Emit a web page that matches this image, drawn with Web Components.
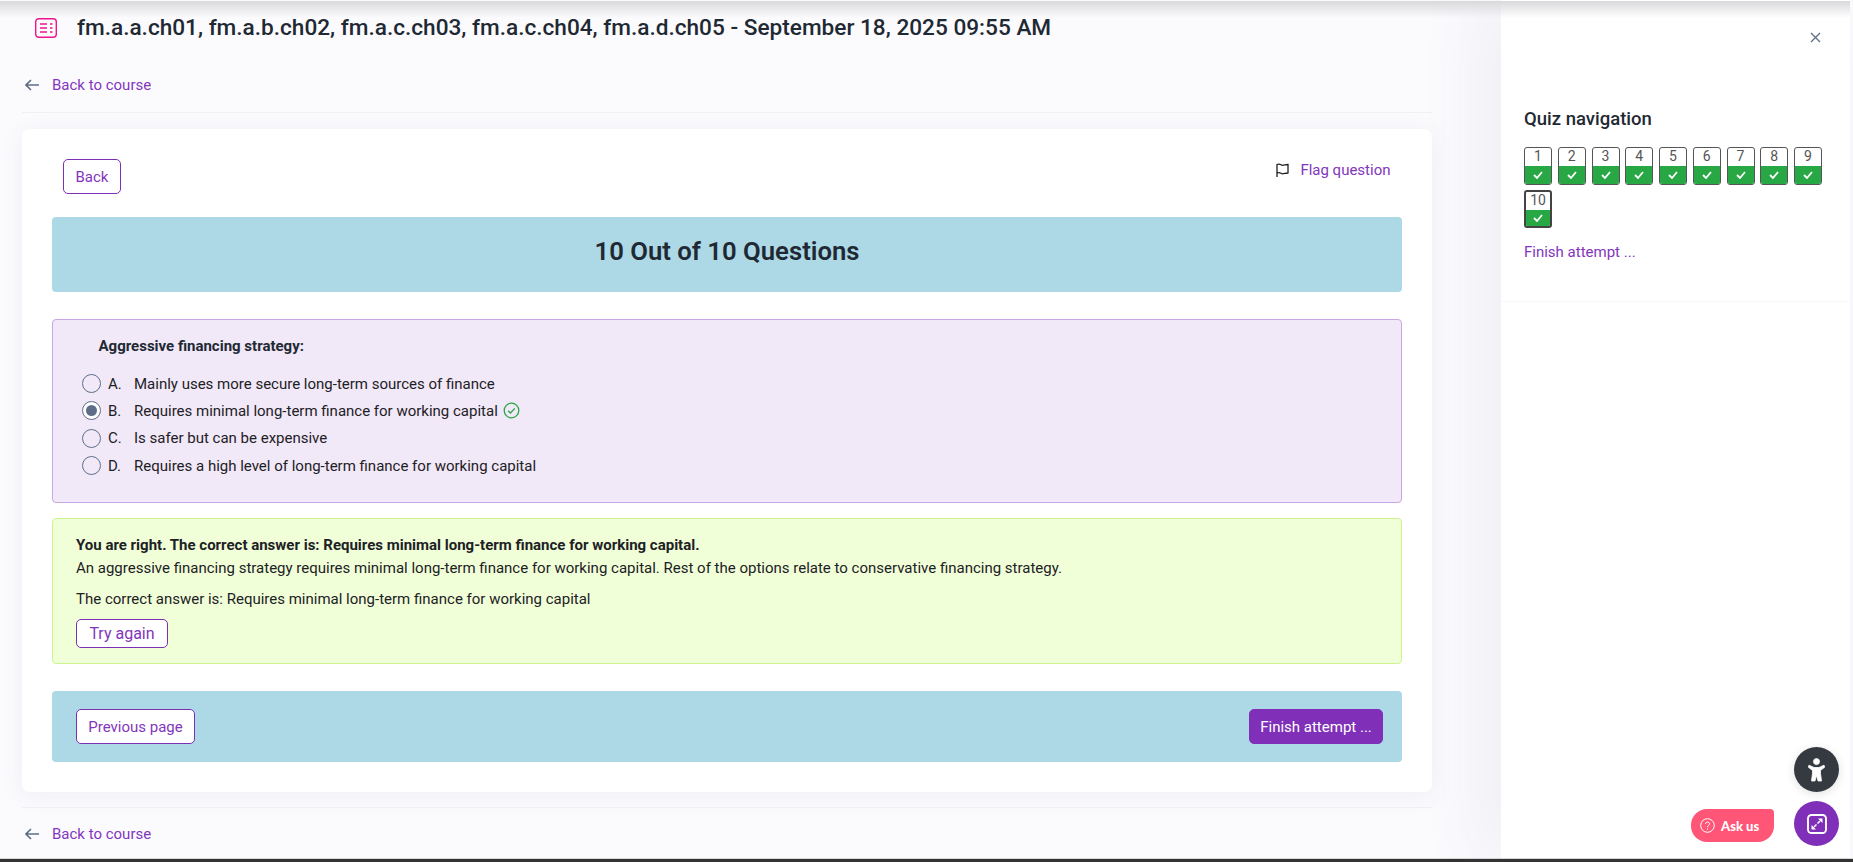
<!DOCTYPE html>
<html>
<head>
<meta charset="utf-8">
<title>Quiz</title>
<style>
	html, body { margin: 0; height: 100%; overflow: hidden; background: #fbfbfe; }
	body { font-family: Roboto, "Liberation Sans", sans-serif; }
</style>
</head>
<body>
<quiz-app>
	<back-link slot="top-link"></back-link>
	<quiz-card>
		<question-box title-text="Aggressive financing strategy:">
			<answer-option letter="A.">Mainly uses more secure long-term sources of finance</answer-option>
			<answer-option letter="B." checked correct>Requires minimal long-term finance for working capital</answer-option>
			<answer-option letter="C.">Is safer but can be expensive</answer-option>
			<answer-option letter="D.">Requires a high level of long-term finance for working capital</answer-option>
		</question-box>
		<feedback-box></feedback-box>
		<page-actions></page-actions>
	</quiz-card>
	<back-link slot="bottom-link"></back-link>
	<quiz-sidebar slot="sidebar"></quiz-sidebar>
</quiz-app>
<floating-widgets></floating-widgets>

<script>
const back_link_template = document.createElement('template')
back_link_template.innerHTML = `
	<style>
		:host { display: flex; align-items: center; height: 36px; font-size: 15px; color: #8236bd; }
		svg { width: 14px; height: 12px; margin: 0 13px 0 3px; }
	</style>
	<svg viewBox="0 0 14 12" fill="none" stroke="#5f6e88" stroke-width="1.6"><path d="M14 6H1.2M6 1 1 6l5 5"/></svg>
	<span>Back to course</span>
`
class BackLink extends HTMLElement {
	constructor(){
		super()
		this.attachShadow({mode: 'open'}).appendChild(back_link_template.content.cloneNode(true))
	}
}
customElements.define('back-link', BackLink)

const quiz_button_template = document.createElement('template')
quiz_button_template.innerHTML = `
	<style>
		:host { display: inline-flex; align-items: center; justify-content: center; box-sizing: border-box; height: 35px; padding: 0 11px; font-size: 15px; border: 1px solid #7b2fb5; border-radius: 5px; background: #fff; color: #8236bd; white-space: nowrap; }
		:host([primary]) { background: #7f2fb8; border-color: #7f2fb8; color: #fff; }
	</style>
	<slot></slot>
`
class QuizButton extends HTMLElement {
	constructor(){
		super()
		this.attachShadow({mode: 'open'}).appendChild(quiz_button_template.content.cloneNode(true))
	}
}
customElements.define('quiz-button', QuizButton)

const app_template = document.createElement('template')
app_template.innerHTML = `
	<style>
		:host { display: flex; flex-direction: column; height: 862px; color: #1f2933; }
		.shade { position: absolute; left: 0; top: 1px; width: 1850px; height: 17px; background: linear-gradient(#d9d9dc, rgba(240,240,244,0)); z-index: 5; pointer-events: none; }
		.body { flex: 1; display: flex; min-height: 0; }
		.main { box-sizing: border-box; width: 1501px; padding: 10px 69px 0 22px; }
		.title { display: flex; align-items: center; gap: 20px; height: 35px; padding-left: 13px; }
		.title svg { width: 22px; height: 20px; }
		h1 { margin: 0; font-size: 22.620px; font-weight: 500; white-space: nowrap; }
		.top { padding: 22px 0 9px; border-bottom: 1px solid #eff0f3; margin-bottom: 16px; }
		.bottom { margin-top: 15px; border-top: 1px solid #eff0f3; padding-top: 8px; }
		.side { width: 349px; }
		.bar { height: 4px; background: #333; border-top: 1px solid #d8d8d8; box-sizing: border-box; }
	</style>
	<div class="shade"></div>
	<div class="body">
		<div class="main">
			<div class="title">
				<svg viewBox="0 0 22 20" fill="none" stroke="#f0158c" stroke-width="1.4">
					<rect x=".7" y=".7" width="20.6" height="18.6" rx="3"/>
					<path d="M5 6h7M5 10h7M5 14h7M15 6h2.5M15 10h2.5M15 14h2.5"/>
				</svg>
				<h1>fm.a.a.ch01, fm.a.b.ch02, fm.a.c.ch03, fm.a.c.ch04, fm.a.d.ch05 - September 18, 2025 09:55 AM</h1>
			</div>
			<div class="top"><slot name="top-link"></slot></div>
			<slot></slot>
			<div class="bottom"><slot name="bottom-link"></slot></div>
		</div>
		<div class="side"><slot name="sidebar"></slot></div>
	</div>
	<div class="bar"></div>
`
class QuizApp extends HTMLElement {
	constructor(){
		super()
		this.attachShadow({mode: 'open'}).appendChild(app_template.content.cloneNode(true))
	}
}
customElements.define('quiz-app', QuizApp)

const card_template = document.createElement('template')
card_template.innerHTML = `
	<style>
		:host { display: block; box-sizing: border-box; height: 663px; padding: 30px; background: #fff; border-radius: 8px; box-shadow: 0 4px 24px rgba(90,90,120,.07); }
		.head { display: flex; justify-content: space-between; height: 58px; padding: 0 11.5px 0 11px; }
		.back { width: 58px; height: 35px; }
		.flag { display: flex; align-items: center; gap: 11.500px; height: 22px; font-size: 15px; color: #8236bd; }
		.flag svg { width: 13px; height: 14px; }
		.banner { display: flex; align-items: center; justify-content: center; box-sizing: border-box; height: 75px; padding-bottom: 8px; margin-bottom: 27px; background: #add8e6; border-radius: 4px; font-size: 25.700px; font-weight: 600; }
	</style>
	<div class="head">
		<quiz-button class="back">Back</quiz-button>
		<div class="flag">
			<svg viewBox="0 0 13 14" fill="none" stroke="#1d2125" stroke-width="1.3"><path d="M1 14V1.5c3-1.4 4 .8 5.5.8s3-.6 5.5-.8v8.5c-2.500.2-4 .8-5.500.8S4 8.700 1 10"/></svg>
			<span>Flag question</span>
		</div>
	</div>
	<div class="banner">10 Out of 10 Questions</div>
	<slot></slot>
`
class QuizCard extends HTMLElement {
	constructor(){
		super()
		this.attachShadow({mode: 'open'}).appendChild(card_template.content.cloneNode(true))
	}
}
customElements.define('quiz-card', QuizCard)

const question_template = document.createElement('template')
question_template.innerHTML = `
	<style>
		:host { display: block; box-sizing: border-box; height: 184px; margin-bottom: 15px; padding: 15px 0 0 29px; background: #f1e8f8; border: 1px solid #c9a6e6; border-radius: 4px; font-size: 15px; }
		.q { height: 22px; line-height: 22px; margin: 0 0 13px 16.500px; font-weight: 700; }
	</style>
	<div class="q"></div>
	<slot></slot>
`
class QuestionBox extends HTMLElement {
	constructor(){
		super()
		this.attachShadow({mode: 'open'}).appendChild(question_template.content.cloneNode(true))
		this.shadowRoot.querySelector('.q').textContent = this.getAttribute('title-text')
	}
}
customElements.define('question-box', QuestionBox)

const option_template = document.createElement('template')
option_template.innerHTML = `
	<style>
		:host { display: flex; align-items: center; height: 27.300px; color: #1d2125; }
		.radio { box-sizing: border-box; width: 19px; height: 19px; border: 1.500px solid #5f6e88; border-radius: 50%; margin-right: 7px; display: flex; align-items: center; justify-content: center; }
		:host([checked]) .radio { background: #fff; }
		:host([checked]) .radio::after { content: ''; width: 11px; height: 11px; border-radius: 50%; background: #5f6e88; }
		.letter { width: 26px; }
		svg { display: none; width: 17px; height: 17px; margin-left: 5px; }
		:host([correct]) svg { display: block; }
	</style>
	<span class="radio"></span>
	<span class="letter"></span>
	<slot></slot>
	<svg viewBox="0 0 17 17" fill="none" stroke="#28a745" stroke-width="1.300"><circle cx="8.500" cy="8.500" r="7.300"/><path d="m5.200 8.700 2.300 2.300 4.300-4.600"/></svg>
`
class AnswerOption extends HTMLElement {
	constructor(){
		super()
		this.attachShadow({mode: 'open'}).appendChild(option_template.content.cloneNode(true))
		this.shadowRoot.querySelector('.letter').textContent = this.getAttribute('letter')
	}
}
customElements.define('answer-option', AnswerOption)

const feedback_template = document.createElement('template')
feedback_template.innerHTML = `
	<style>
		:host { display: block; box-sizing: border-box; height: 146px; margin-bottom: 27px; padding: 15px 23px 0; background: #f0ffd8; border: 1px solid #cdf58f; border-radius: 4px; font-size: 15px; line-height: 23px; color: #1d2125; }
		b { display: block; font-weight: 700; }
		p { margin: 0 0 8px; }
		quiz-button { height: 29px; width: 92px; padding: 0; font-size: 16px; margin-top: 8px; }
	</style>
	<b>You are right. The correct answer is: Requires minimal long-term finance for working capital.</b>
	<p>An aggressive financing strategy requires minimal long-term finance for working capital. Rest of the options relate to conservative financing strategy.</p>
	<div>The correct answer is: Requires minimal long-term finance for working capital</div>
	<quiz-button>Try again</quiz-button>
`
class FeedbackBox extends HTMLElement {
	constructor(){
		super()
		this.attachShadow({mode: 'open'}).appendChild(feedback_template.content.cloneNode(true))
	}
}
customElements.define('feedback-box', FeedbackBox)

const actions_template = document.createElement('template')
actions_template.innerHTML = `
	<style>
		:host { display: flex; justify-content: space-between; align-items: center; box-sizing: border-box; height: 71px; padding: 0 19px 0 24px; background: #add8e6; border-radius: 4px; }
		.prev { width: 119px; padding: 0; }
		.finish { width: 134px; padding: 0; }
	</style>
	<quiz-button class="prev">Previous page</quiz-button>
	<quiz-button class="finish" primary>Finish attempt ...</quiz-button>
`
class PageActions extends HTMLElement {
	constructor(){
		super()
		this.attachShadow({mode: 'open'}).appendChild(actions_template.content.cloneNode(true))
	}
}
customElements.define('page-actions', PageActions)

const nav_button_template = document.createElement('template')
nav_button_template.innerHTML = `
	<style>
		:host { display: flex; flex-direction: column; box-sizing: border-box; width: 28px; height: 38px; border: 1px solid #555; border-radius: 3px; overflow: hidden; background: #fff; font-size: 14px; color: #555; }
		:host([current]) { border: 2px solid #444; }
		.n { flex: 1; display: flex; align-items: center; justify-content: center; padding-bottom: 2px; }
		.c { height: 18px; background: #28a745; display: flex; align-items: center; justify-content: center; }
		svg { width: 10px; height: 8px; }
	</style>
	<div class="n"><slot></slot></div>
	<div class="c"><svg viewBox="0 0 10 8" fill="none" stroke="#fff" stroke-width="1.800"><path d="m1 4 3 3 5-6"/></svg></div>
`
class NavButton extends HTMLElement {
	constructor(){
		super()
		this.attachShadow({mode: 'open'}).appendChild(nav_button_template.content.cloneNode(true))
	}
}
customElements.define('nav-button', NavButton)

const sidebar_template = document.createElement('template')
sidebar_template.innerHTML = `
	<style>
		:host { display: block; position: relative; box-sizing: border-box; height: 100%; background: #fff; box-shadow: -20px 0 60px rgba(90,90,130,.08); }
		.close { display: flex; justify-content: flex-end; padding: 32px 29px 0 0; height: 44px; box-sizing: border-box; }
		.close svg { width: 11px; height: 11px; }
		.block { height: 258px; box-sizing: border-box; padding: 61px 28px 0 23px; border-bottom: 1px solid #f8f8fa; }
		h3 { margin: 0 0 14px; height: 28px; line-height: 28px; font-size: 18.500px; font-weight: 500; color: #1f2933; }
		.grid { display: flex; flex-wrap: wrap; gap: 5px 5.750px; margin-bottom: 14px; }
		a { display: block; font-size: 15px; line-height: 20px; color: #8236bd; }
	</style>
	<div class="close"><svg viewBox="0 0 11 11" fill="none" stroke="#5f6e88" stroke-width="1.300"><path d="m1 1 9 9M10 1l-9 9"/></svg></div>
	<div class="block">
		<h3>Quiz navigation</h3>
		<div class="grid"></div>
		<a>Finish attempt ...</a>
	</div>
`
class QuizSidebar extends HTMLElement {
	constructor(){
		super()
		this.attachShadow({mode: 'open'}).appendChild(sidebar_template.content.cloneNode(true))
		const grid = this.shadowRoot.querySelector('.grid')
		for (let i = 1; i <= 10; i++) {
			const btn = document.createElement('nav-button')
			btn.textContent = i
			if (i == 10) btn.setAttribute('current', '')
			grid.appendChild(btn)
		}
	}
}
customElements.define('quiz-sidebar', QuizSidebar)

const widgets_template = document.createElement('template')
widgets_template.innerHTML = `
	<style>
		:host { display: block; }
		.round { position: fixed; left: 1794px; width: 45px; height: 45px; border-radius: 50%; display: flex; align-items: center; justify-content: center; z-index: 9; }
		.access { top: 747px; background: #343a40; box-shadow: 0 2px 10px rgba(0,0,0,.12); }
		.expand { top: 801px; background: #7f2fb8; }
		.ask { position: fixed; left: 1691px; top: 809px; width: 83px; height: 33px; box-sizing: border-box; padding-left: 9px; display: flex; align-items: center; gap: 6px; background: #ff5577; border-radius: 16px 4px 16px 16px; color: #fff; font: 900 13px Lato, "Open Sans", sans-serif; z-index: 9; }
		.ask svg { width: 15px; height: 15px; }
	</style>
	<div class="round access">
		<svg width="17" height="24" viewBox="0 0 17 24" fill="#fff" stroke="#fff" stroke-width=".8" stroke-linejoin="round">
			<circle cx="8.500" cy="3.600" r="3"/>
			<path d="M1 7.200 6 9.500h5l5-2.300.8 1.900-4.300 3.300v3L13.500 23H10L8.500 17.500 7 23H3.500l1-7.600v-3L.2 9.100z"/>
		</svg>
	</div>
	<div class="ask">
		<svg viewBox="0 0 15 15" fill="none" stroke="#fff" stroke-width="1"><circle cx="7.500" cy="7.500" r="6.800"/><path d="M5.600 5.900c0-2.500 3.900-2.500 3.900-.1 0 1.600-2 1.600-2 3.300M7.500 10.300v1.200"/></svg>
		<span>Ask us</span>
	</div>
	<div class="round expand">
		<svg width="20" height="20" viewBox="0 0 20 20" fill="none" stroke="#fff" stroke-width="1.500">
			<rect x="1" y="1" width="18" height="18" rx="3.500" stroke-width="1.900"/>
			<path d="M10.500 9.500 13 7M9.500 10.500 7 13"/>
			<path d="M11 4.500h4.500V9zM9 15.500H4.500V11z" fill="#fff" stroke="none"/>
		</svg>
	</div>
`
class FloatingWidgets extends HTMLElement {
	constructor(){
		super()
		this.attachShadow({mode: 'open'}).appendChild(widgets_template.content.cloneNode(true))
	}
}
customElements.define('floating-widgets', FloatingWidgets)
</script>
</body>
</html>
